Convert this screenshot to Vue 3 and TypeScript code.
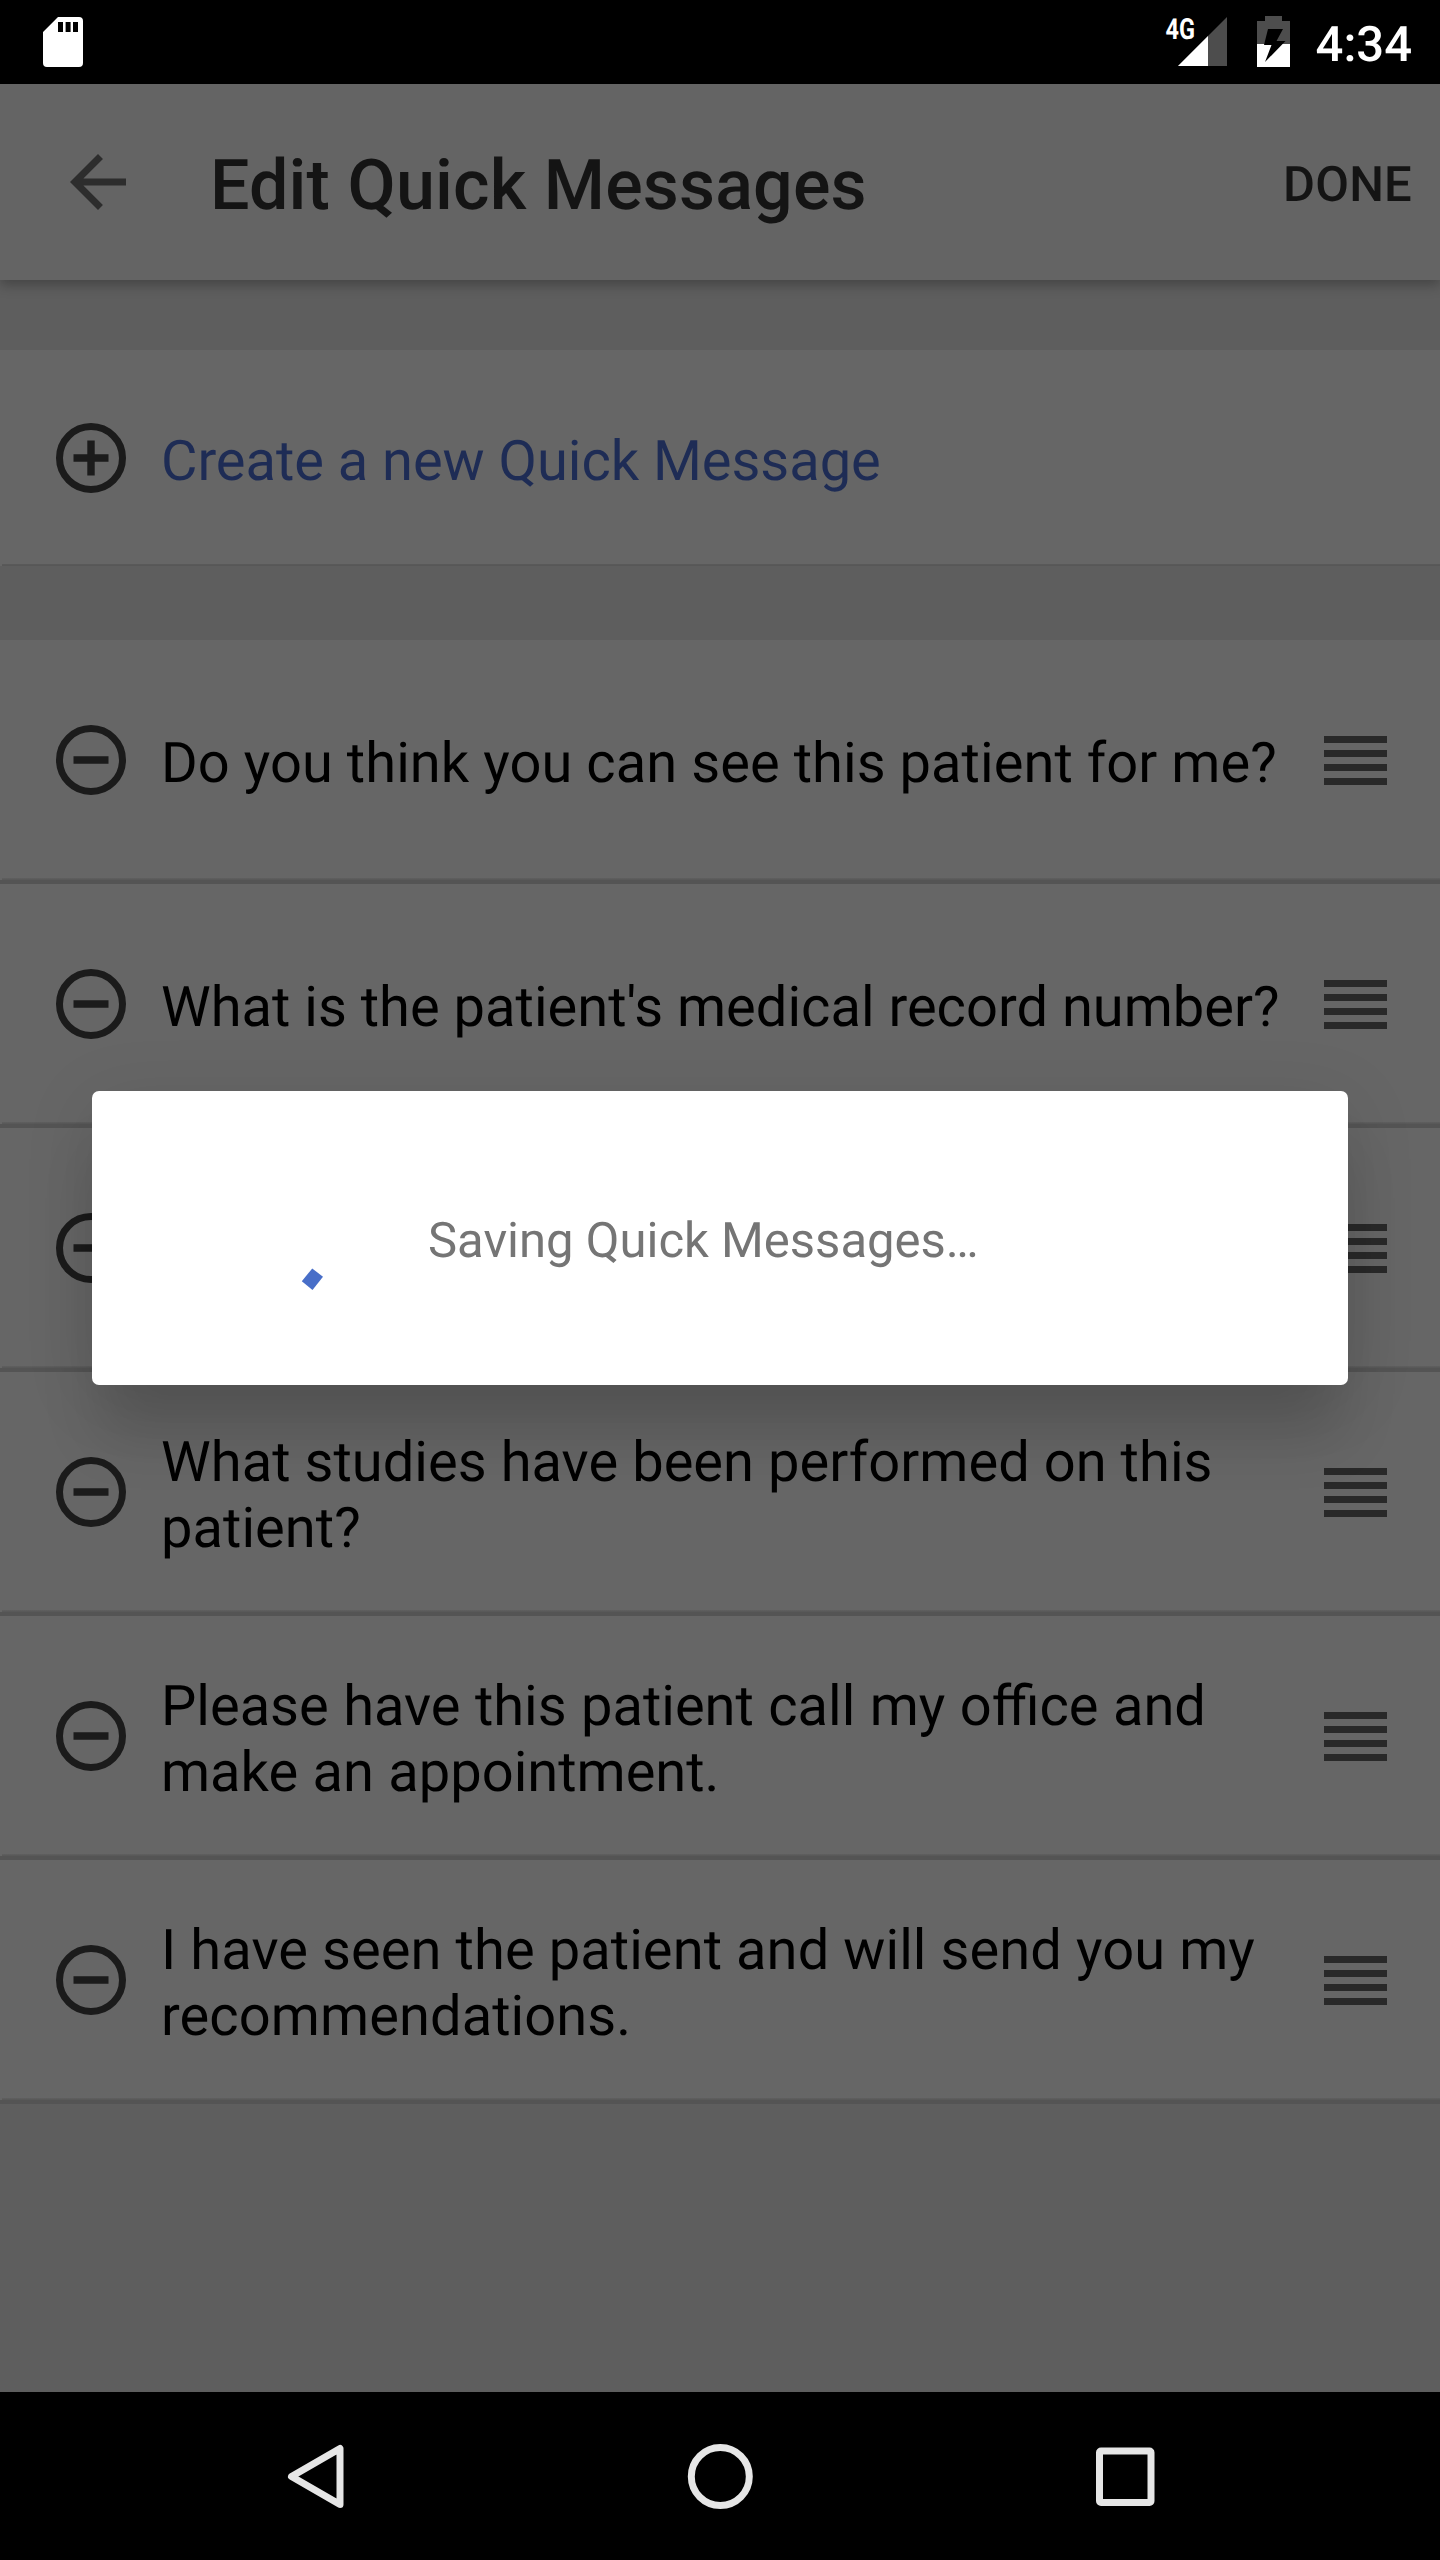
<script setup lang="ts">
interface QuickMessage {
  id: number
  text: string
  tracking?: string
  wordSpacing?: string
}

const messages: QuickMessage[] = [
  { id: 1, text: 'Do you think you can see this patient for me?', tracking: '0.07px' },
  { id: 2, text: "What is the patient's medical record number?", tracking: '0.02px' },
  { id: 3, text: '' },
  { id: 4, text: 'What studies have been performed on this patient?', tracking: '0.05px' },
  { id: 5, text: 'Please have this patient call my office and make an appointment.', wordSpacing: '0.55px' },
  { id: 6, text: 'I have seen the patient and will send you my recommendations.', tracking: '0.09px' },
]
</script>

<template>
  <div class="screen">
    <header class="status">
      <svg class="sd" width="40" height="50" viewBox="0 0 40 50">
        <path fill="#fff" fill-rule="evenodd" d="M15 0H36a4 4 0 0 1 4 4V46a4 4 0 0 1-4 4H4a4 4 0 0 1-4-4V15ZM15 5V15H20V5ZM22.600 5V15H27.600V5ZM30 5V15H35V5Z" />
      </svg>
      <div class="status-right">
        <svg width="62" height="84" viewBox="0 0 62 84">
          <path fill="#4d4d4d" d="M62 17V66H13Z" />
          <path fill="#fff" d="M43 36V66H13Z" />
          <text x="0.500" y="39" class="net" textLength="29.500" lengthAdjust="spacingAndGlyphs">4G</text>
        </svg>
        <svg class="battery" width="33" height="84" viewBox="0 0 33 84">
          <path fill="#4d4d4d" d="M8 16H25V21H33V44H0V21H8Z" />
          <path fill="#fff" d="M0 44H33V67H0Z" />
          <path fill="#000" d="M11 29H26L19.500 41H28.500L8 62L14.500 45H7Z" />
        </svg>
        <span class="clock">4:34</span>
      </div>
    </header>

    <div class="appbar">
      <svg class="back" width="84" height="84" viewBox="0 0 24 24">
        <path fill="#2d2d2d" d="M20 11H7.830l5.590-5.590L12 4l-8 8 8 8 1.410-1.410L7.830 13H20z" />
      </svg>
      <h1 class="title">Edit Quick Messages</h1>
      <span class="done">DONE</span>
    </div>

    <main class="content">
      <div class="card create">
        <svg class="circle" width="84" height="84" viewBox="0 0 84 84">
          <circle cx="42" cy="42" r="31.500" fill="none" stroke="#1b1b1b" stroke-width="7" />
          <path fill="#1b1b1b" d="M24.500 38.300H38.300V24.500H45.700V38.300H59.500V45.700H45.700V59.500H38.300V45.700H24.500Z" />
        </svg>
        <span class="label link">Create a new Quick Message</span>
      </div>

      <div class="list">
        <div v-for="m in messages" :key="m.id" class="card row">
          <svg class="circle" width="84" height="84" viewBox="0 0 84 84">
            <circle cx="42" cy="42" r="31.500" fill="none" stroke="#1b1b1b" stroke-width="7" />
            <path fill="#1b1b1b" d="M24.500 38.300H59.500V45.700H24.500Z" />
          </svg>
          <span class="label" :style="{ letterSpacing: m.tracking, wordSpacing: m.wordSpacing }">{{ m.text }}</span>
          <svg class="handle" width="63" height="49" viewBox="0 0 63 49">
            <path fill="#292929" d="M0 0H63V7H0ZM0 14H63V21H0ZM0 28H63V35H0ZM0 42H63V49H0Z" />
          </svg>
        </div>
      </div>
    </main>

    <nav class="nav">
      <svg width="68" height="68" viewBox="0 0 68 68">
        <path fill="none" stroke="#e6e6e6" stroke-width="7" stroke-linejoin="round" d="M59 6.500V62.500L10.500 34.500Z" />
      </svg>
      <svg width="68" height="68" viewBox="0 0 68 68">
        <circle cx="34.300" cy="34.500" r="29" fill="none" stroke="#e6e6e6" stroke-width="7" />
      </svg>
      <svg width="68" height="68" viewBox="0 0 68 68">
        <rect x="8.500" y="9" width="51.500" height="51.500" rx="1.500" fill="none" stroke="#e6e6e6" stroke-width="7" />
      </svg>
    </nav>

    <div class="overlay">
      <div class="dialog">
        <svg class="spinner" width="168" height="168" viewBox="0 0 168 168">
          <path fill="#486ec8" d="M96.200 114.500L107 122.700L96.500 136L85.800 127.300Z" />
        </svg>
        <span class="saving">Saving Quick Messages…</span>
      </div>
    </div>
  </div>
</template>

<style>
body {
  margin: 0;
  background: #000;
}
</style>

<style scoped>
.screen {
  position: relative;
  display: flex;
  flex-direction: column;
  width: 1440px;
  height: 2560px;
  overflow: hidden;
  background: #5e5e5e;
  font-family: Roboto, sans-serif;
  text-rendering: geometricPrecision;
}
svg {
  display: block;
  flex: none;
}
.status {
  display: flex;
  justify-content: space-between;
  align-items: center;
  height: 84px;
  padding: 0 28px 0 43px;
  background: #000;
}
.status-right {
  display: flex;
  align-items: center;
}
.net {
  font: 700 29px Roboto, sans-serif;
  fill: #fff;
}
.battery {
  margin: 0 0 0 30px;
}
.clock {
  width: 122px;
  text-align: right;
  font-size: 49px;
  font-weight: 500;
  line-height: 58px;
  padding-top: 6px;
  color: #fff;
}
.appbar {
  position: relative;
  display: flex;
  align-items: center;
  height: 196px;
  padding: 0 28px 0 56px;
  box-sizing: border-box;
  background: #646464;
  box-shadow: 0 5px 12px rgba(0, 0, 0, 0.28);
  color: #141414;
}
.title {
  flex: 1;
  margin: 0 0 0 70px;
  padding-top: 8px;
  font-size: 70px;
  font-weight: 500;
  line-height: 82px;
  letter-spacing: 0.14px;
  white-space: nowrap;
}
.done {
  font-size: 49px;
  font-weight: 500;
  line-height: 58px;
  padding-top: 6px;
  letter-spacing: 0.2px;
}
.content {
  flex: 1;
  padding-top: 70px;
}
.card {
  display: flex;
  align-items: center;
  box-sizing: border-box;
  padding: 0 53px 0 49px;
  background: #666;
}
.create {
  height: 216px;
  background: linear-gradient(#5a5a5a, #565656) 2px 100% / 100% 2px no-repeat, #666;
}
.list {
  margin-top: 74px;
}
.row {
  height: 244px;
  border-bottom: 4px solid #545454;
  background: linear-gradient(#606060, #575757) 2px 100% / 100% 2px no-repeat, #666;
}
.label {
  flex: 1;
  margin-left: 28px;
  padding-top: 6px;
  font-size: 56px;
  line-height: 66px;
  color: #000;
}
.link {
  color: #1e2c55;
  letter-spacing: -0.03px;
}
.handle {
  margin-left: 30px;
}
.nav {
  display: flex;
  align-items: center;
  justify-content: center;
  gap: 337px;
  height: 168px;
  background: #000;
}
.overlay {
  position: absolute;
  inset: 84px 0 168px;
  display: flex;
  align-items: center;
  justify-content: center;
}
.dialog {
  display: flex;
  align-items: center;
  width: 1256px;
  height: 294px;
  box-sizing: border-box;
  padding-left: 124px;
  border-radius: 7px;
  background: #fff;
  box-shadow:
    0 58px 56px -8px rgba(0, 0, 0, 0.14),
    0 12px 72px rgba(0, 0, 0, 0.1);
}
.saving {
  margin-left: 44px;
  padding-top: 6px;
  font-size: 49px;
  line-height: 58px;
  color: #757575;
  white-space: nowrap;
}
</style>
